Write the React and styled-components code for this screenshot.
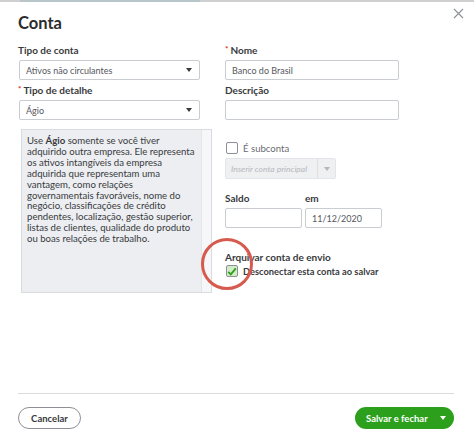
import React from 'react';
import styled, { createGlobalStyle } from 'styled-components';

const GlobalStyle = createGlobalStyle`
  html, body {
    margin: 0;
    padding: 0;
    background: #ffffff;
  }
  body {
    font-family: Lato, "Open Sans", Arial, sans-serif;
    color: #393a3d;
  }
`;

const Page = styled.div`
  width: 474px;
  height: 446px;
  display: flex;
  flex-direction: column;
  overflow: hidden;
  background: #fff;
`;

const TopStrip = styled.div`
  height: 2px;
  background: #cfd0d1;
  padding-left: 20px;
  display: flex;
`;

const StripSegment = styled.div`
  width: 180px;
  background: #b9c6c9;
`;

const Header = styled.div`
  display: flex;
  justify-content: space-between;
  align-items: flex-start;
  padding: 6px 9px 0 18px;
  height: 35px;
  box-sizing: border-box;
`;

const Title = styled.h1`
  margin: 5px 0 0;
  font-size: 16.5px;
  font-weight: 700;
  line-height: 20px;
  color: #2b2c2e;
`;

const CloseButton = styled.button`
  border: 0;
  background: none;
  padding: 0;
  width: 12px;
  height: 12px;
  display: flex;
  cursor: pointer;
`;

const Form = styled.div`
  display: grid;
  grid-template-columns: 194px 1fr;
  column-gap: 13px;
  padding: 7px 18px 0 18px;
`;

const Column = styled.div`
  display: flex;
  flex-direction: column;
`;

const Label = styled.label`
  font-size: 10px;
  font-weight: 700;
  line-height: 13px;
  margin-top: ${({ $top }) => $top || 0}px;
  margin-bottom: ${({ $gap }) => ($gap === undefined ? 3 : $gap)}px;
  color: #393a3d;
  display: flex;
  gap: 2px;
`;

const Required = styled.span`
  color: #d52b1e;
  font-size: 8px;
  line-height: 10px;
`;

const SelectBox = styled.div`
  width: ${({ $w }) => $w}px;
  height: 20px;
  box-sizing: border-box;
  border: 1px solid #c9ccd0;
  border-radius: 2px;
  display: flex;
  align-items: center;
  padding: 0 7px 0 6px;
  font-size: 9px;
  color: #55575c;
  background: #fff;
  margin-left: 1px;
`;

const SelectText = styled.span`
  flex: 1;
`;

const Caret = styled.span`
  width: 0;
  height: 0;
  border-left: 3px solid transparent;
  border-right: 3px solid transparent;
  border-top: 4px solid ${({ $light }) => ($light ? '#b3b6bb' : '#393a3d')};
`;

const TextInput = styled.div`
  width: ${({ $w }) => $w}px;
  height: 20px;
  box-sizing: border-box;
  border: 1px solid #c9ccd0;
  border-radius: 2px;
  display: flex;
  align-items: center;
  padding: 0 6px;
  font-size: 9px;
  color: #55575c;
  background: #fff;
`;

const HelpBox = styled.div`
  margin: 9px 0 0 3px;
  height: 164px;
  box-sizing: border-box;
  border: 1px solid #d9dbde;
  background: #eceef1;
  display: flex;
`;

const HelpText = styled.p`
  flex: 1;
  margin: 0;
  padding: 6px 4px 0 5px;
  font-size: 9.6px;
  line-height: 10.9px;
  color: #393a3d;

  & strong {
    font-weight: 700;
  }
`;

const ScrollTrack = styled.div`
  width: 9px;
  background: #f6f7f8;
  border-left: 1px solid #e3e5e8;
`;

const CheckRow = styled.div`
  display: flex;
  align-items: center;
  gap: 5px;
  margin-top: ${({ $top }) => $top || 0}px;
  margin-left: 1px;
  font-size: ${({ $bold }) => ($bold ? 9.3 : 9.6)}px;
  font-weight: ${({ $bold }) => ($bold ? 700 : 400)};
  color: ${({ $muted }) => ($muted ? '#6b6c72' : '#393a3d')};
  position: relative;
`;

const Box = styled.span`
  width: 12px;
  height: 12px;
  box-sizing: border-box;
  border: 1px solid #8d9096;
  border-radius: 2px;
  background: ${({ $checked }) => ($checked ? '#d3ebc6' : '#fff')};
  display: flex;
  align-items: center;
  justify-content: center;
`;

const DisabledSelect = styled.div`
  margin-top: 4px;
  width: 111px;
  height: 21px;
  box-sizing: border-box;
  border: 1px solid #e3e5e8;
  border-radius: 2px;
  background: #eef0f2;
  display: flex;
  align-items: stretch;
`;

const Placeholder = styled.span`
  flex: 1;
  display: flex;
  align-items: center;
  padding-left: 5px;
  font-size: 8.5px;
  font-style: italic;
  color: #b5b8bd;
`;

const CaretCell = styled.span`
  width: 17px;
  border-left: 1px solid #dcdee1;
  display: flex;
  align-items: center;
  justify-content: center;
`;

const BalanceRow = styled.div`
  display: flex;
  gap: 3px;
  margin-top: 13px;
`;

const Highlight = styled.span`
  position: absolute;
  left: -25px;
  top: -27px;
  width: 52px;
  height: 52px;
  box-sizing: border-box;
  border: 3.5px solid #d65a4e;
  border-radius: 50%;
  pointer-events: none;
`;

const Spacer = styled.div`
  flex: 1;
`;

const Footer = styled.div`
  margin: 0 20px 17px 18px;
  border-top: 1px solid #d9dbde;
  padding-top: 13px;
  display: flex;
  justify-content: space-between;
`;

const CancelButton = styled.button`
  height: 22px;
  width: 63px;
  border: 1px solid #8d9096;
  border-radius: 11px;
  background: #fff;
  font-family: inherit;
  font-size: 9.5px;
  font-weight: 700;
  color: #393a3d;
  padding: 0;
`;

const SaveButton = styled.button`
  height: 22px;
  width: 99px;
  border: 0;
  border-radius: 11px;
  background: #2ca01c;
  font-family: inherit;
  font-size: 9.5px;
  font-weight: 700;
  color: #fff;
  display: flex;
  align-items: center;
  padding: 0 8px 0 11px;
  justify-content: space-between;
`;

const WhiteCaret = styled.span`
  width: 0;
  height: 0;
  border-left: 3px solid transparent;
  border-right: 3px solid transparent;
  border-top: 4px solid #fff;
`;

function Check() {
  return (
    <svg width="10" height="9" viewBox="0 0 10 9">
      <path d="M1.2 4.8 L3.8 7.4 L8.8 1.4" fill="none" stroke="#2ca01c" strokeWidth="1.8" />
    </svg>
  );
}

export default function App() {
  return (
    <Page>
      <GlobalStyle />
      <TopStrip>
        <StripSegment />
      </TopStrip>
      <Header>
        <Title>Conta</Title>
        <CloseButton aria-label="Fechar">
          <svg width="11" height="11" viewBox="0 0 11 11">
            <path d="M1 1 L10 10 M10 1 L1 10" stroke="#8d9096" strokeWidth="1.1" />
          </svg>
        </CloseButton>
      </Header>

      <Form>
        <Column>
          <Label>Tipo de conta</Label>
          <SelectBox $w={181}>
            <SelectText>Ativos não circulantes</SelectText>
            <Caret />
          </SelectBox>
          <Label $top={4}>
            <Required>*</Required>Tipo de detalhe
          </Label>
          <SelectBox $w={181}>
            <SelectText>Ágio</SelectText>
            <Caret />
          </SelectBox>
          <HelpBox>
            <HelpText>
              Use <strong>Ágio</strong> somente se você tiver adquirido outra
              empresa. Ele representa os ativos intangíveis da empresa
              adquirida que representam uma vantagem, como relações
              governamentais favoráveis, nome do negócio, classificações de
              crédito pendentes, localização, gestão superior, listas de
              clientes, qualidade do produto ou boas relações de trabalho.
            </HelpText>
            <ScrollTrack />
          </HelpBox>
        </Column>

        <Column>
          <Label>
            <Required>*</Required>Nome
          </Label>
          <TextInput $w={174}>Banco do Brasil</TextInput>
          <Label $top={4}>Descrição</Label>
          <TextInput $w={174} />

          <CheckRow $top={22} $muted>
            <Box />É subconta
          </CheckRow>
          <DisabledSelect>
            <Placeholder>Inserir conta principal</Placeholder>
            <CaretCell>
              <Caret $light />
            </CaretCell>
          </DisabledSelect>

          <BalanceRow>
            <Column>
              <Label>Saldo</Label>
              <TextInput $w={77} />
            </Column>
            <Column>
              <Label>em</Label>
              <TextInput $w={77}>11/12/2020</TextInput>
            </Column>
          </BalanceRow>

          <Label $top={23} $gap={1}>
            Arquivar conta de envio
          </Label>
          <CheckRow $bold>
            <Box $checked>
              <Check />
            </Box>
            Desconectar esta conta ao salvar
            <Highlight />
          </CheckRow>
        </Column>
      </Form>

      <Spacer />

      <Footer>
        <CancelButton>Cancelar</CancelButton>
        <SaveButton>
          Salvar e fechar
          <WhiteCaret />
        </SaveButton>
      </Footer>
    </Page>
  );
}
